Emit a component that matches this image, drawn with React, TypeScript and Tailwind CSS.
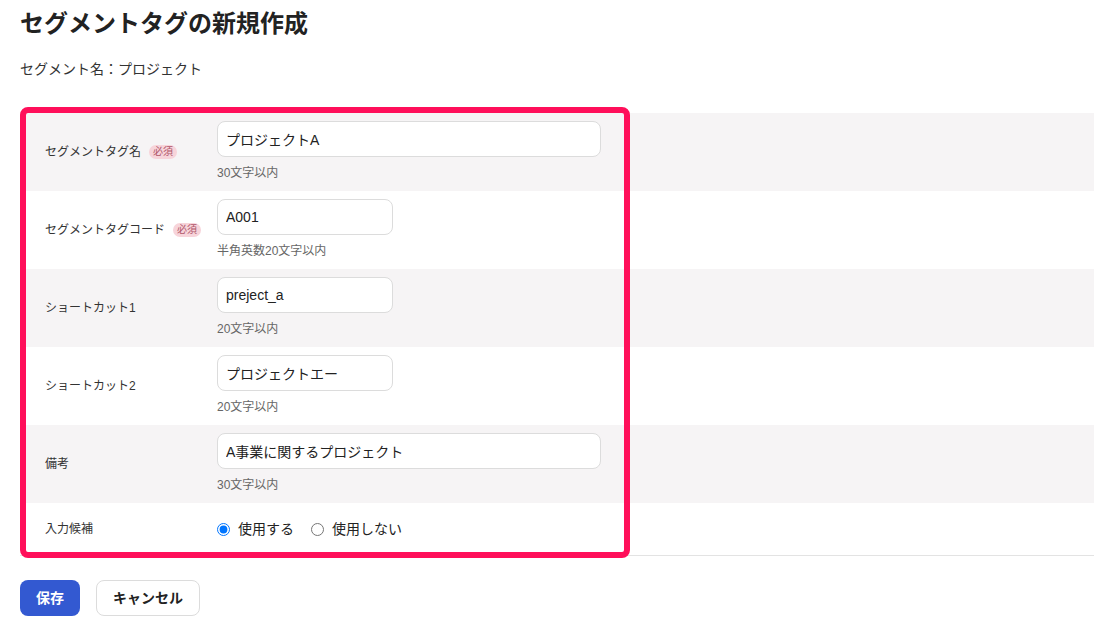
import React from 'react'

type Field = {
  label: string
  required?: boolean
  value: string
  hint: string
  wide?: boolean
}

const fields: Field[] = [
  { label: 'セグメントタグ名', required: true, value: 'プロジェクトA', hint: '30文字以内', wide: true },
  { label: 'セグメントタグコード', required: true, value: 'A001', hint: '半角英数20文字以内' },
  { label: 'ショートカット1', value: 'preject_a', hint: '20文字以内' },
  { label: 'ショートカット2', value: 'プロジェクトエー', hint: '20文字以内' },
  { label: '備考', value: 'A事業に関するプロジェクト', hint: '30文字以内', wide: true },
]

const font = { fontFamily: '"Liberation Sans", "Noto Sans CJK JP", sans-serif' }

export default function App() {
  return (
    <div className="min-h-screen bg-white px-5 pt-[9px] text-[#222]" style={font}>
      <h1 className="text-[24px] font-bold leading-[30px]">セグメントタグの新規作成</h1>
      <p className="mt-[20px] text-[14px] leading-[20px] text-[#333]">セグメント名：プロジェクト</p>

      <div className="relative mt-[34px]">
        <div className="border-b border-[#e3e3e3]">
          {fields.map((f, idx) => (
            <div
              key={f.label}
              className={`flex h-[78px] ${idx % 2 === 0 ? 'bg-[#f6f4f5]' : 'bg-white'}`}
            >
              <div className="flex w-[197px] shrink-0 items-center gap-2 pl-[25px] text-[12px] text-[#333]">
                <span>{f.label}</span>
                {f.required && (
                  <span className="rounded-full bg-[#f7d4da] px-1 text-[10px] leading-[14px] text-[#b0566a]">
                    必須
                  </span>
                )}
              </div>
              <div className="pt-2">
                <input
                  readOnly
                  value={f.value}
                  className={`h-9 rounded-lg border border-[#dcdcdc] bg-white px-2 text-[14px] text-[#222] outline-none ${
                    f.wide ? 'w-[384px]' : 'w-[176px]'
                  }`}
                  style={font}
                />
                <p className="mt-2 text-[12px] leading-4 text-[#666]">{f.hint}</p>
              </div>
            </div>
          ))}
          <div className="flex h-[52px] items-center bg-white">
            <div className="w-[197px] shrink-0 pl-[25px] text-[12px] text-[#333]">入力候補</div>
            <label className="flex items-center gap-2 text-[14px]">
              <input type="radio" name="cand" defaultChecked className="m-0 h-[13px] w-[13px]" />
              使用する
            </label>
            <label className="ml-[17px] flex items-center gap-2 text-[14px]">
              <input type="radio" name="cand" className="m-0 h-[13px] w-[13px]" />
              使用しない
            </label>
          </div>
        </div>

        {/* annotation highlight */}
        <div className="pointer-events-none absolute left-0 top-[-6px] h-[451px] w-[610px] rounded-[8px] border-[6px] border-[#ff0f5a]" />
      </div>

      <div className="mt-6 flex gap-4">
        <button className="h-9 w-[60px] rounded-lg bg-[#3359d1] text-[14px] font-bold text-white">保存</button>
        <button className="h-9 w-[104px] rounded-lg border border-[#dcdcdc] bg-white text-[14px] font-bold text-[#222]">
          キャンセル
        </button>
      </div>
    </div>
  )
}
